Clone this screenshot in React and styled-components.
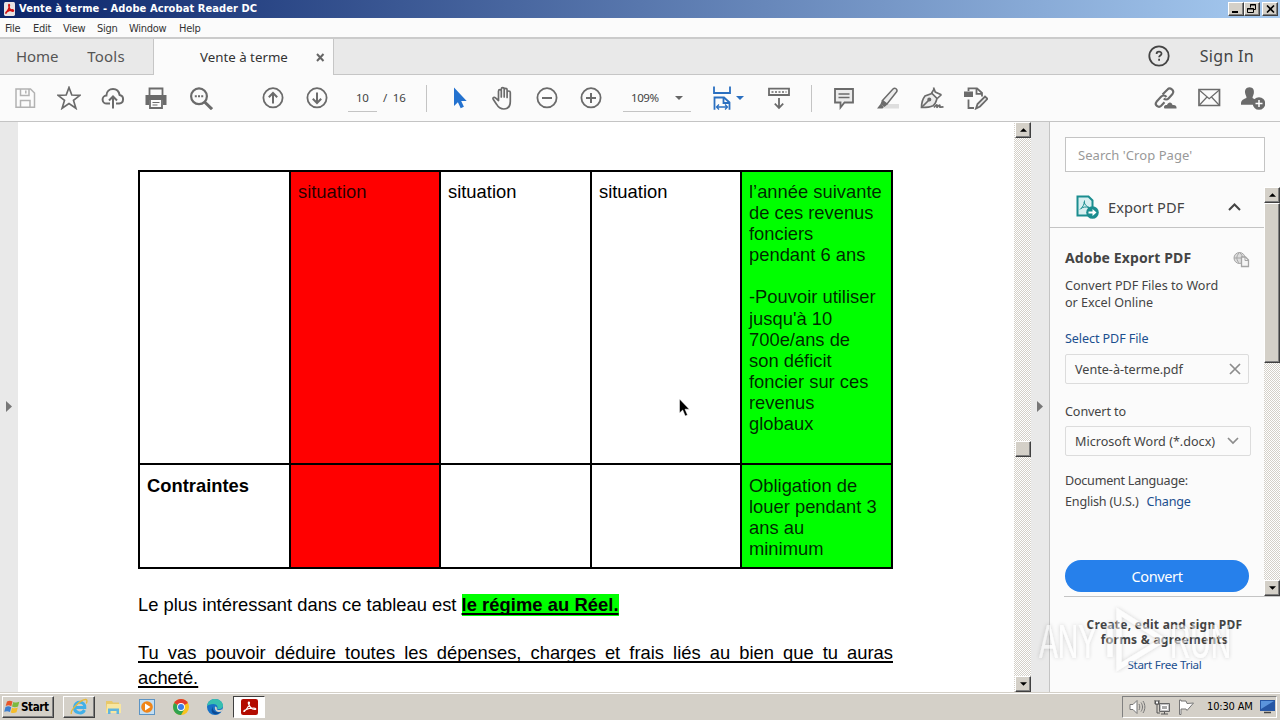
import React from "react";
import styled, { createGlobalStyle, css } from "styled-components";

const GlobalStyle = createGlobalStyle`
  * {
    box-sizing: border-box;
  }

  body {
    margin: 0;
    overflow: hidden;
    font-family: "Noto Sans", sans-serif;
    color: #444;
  }

  svg {
    display: block;
    flex: none;
  }
`;

const raised = css`
  background: #d4d0c8;
  border: 1px solid;
  border-color: #fff #404040 #404040 #fff;
  box-shadow: inset -1px -1px 0 #808080;
`;

const Screen = styled.div`
  width: 1280px;
  height: 720px;
  display: flex;
  flex-direction: column;
  overflow: hidden;
  background: #fbfbfb;
`;

/* title bar */

const TitleBar = styled.header`
  height: 18px;
  display: flex;
  align-items: center;
  padding: 0 2px 0 4px;
  background: linear-gradient(90deg, #0a246a, #a6caf0);
`;

const Title = styled.h1`
  flex: 1;
  margin: 0 0 0 4px;
  font: bold 11px/18px "DejaVu Sans Condensed", sans-serif;
  letter-spacing: 0.09px;
  color: #fff;
`;

const WindowButton = styled.button`
  ${raised}
  width: 16px;
  height: 14px;
  padding: 0;
  margin-left: ${(props) => (props.$gap ? "2px" : "0")};
  display: flex;
  align-items: center;
  justify-content: center;
`;

/* menu */

const MenuBar = styled.nav`
  height: 21px;
  display: flex;
  padding: 1px 0 0 5px;
  border-bottom: 2px solid #cbcbcb;
`;

const MenuItem = styled.span`
  width: ${(props) => props.$width}px;
  font: 11px/19px "DejaVu Sans Condensed", sans-serif;
  letter-spacing: -0.3px;
  color: #333;
`;

/* tabs */

const TabBar = styled.div`
  height: 36px;
  display: flex;
  background: #e9e9e9;
`;

const HomeTabs = styled.div`
  width: 154px;
  display: flex;
  gap: 29px;
  padding-left: 16px;
  border-right: 1px solid #c6c6c6;
  border-bottom: 1px solid #c6c6c6;
  font-size: 15px;
  line-height: 35px;
  color: #555;
`;

const HomeTab = styled.span`
  letter-spacing: ${(props) => props.$spacing}px;
`;

const ActiveTab = styled.div`
  width: 179px;
  display: flex;
  align-items: center;
  justify-content: space-between;
  padding: 0 8px 0 46px;
  background: #fbfbfb;
  font-size: 13.3px;
  color: #333;
`;

const TabRest = styled.div`
  flex: 1;
  display: flex;
  align-items: center;
  justify-content: flex-end;
  gap: 29px;
  padding: 0 26px 2px 0;
  border-left: 1px solid #c6c6c6;
  border-bottom: 1px solid #c6c6c6;
  font-size: 16px;
  letter-spacing: 0.3px;
`;

/* toolbar */

const Toolbar = styled.div`
  height: 47px;
  display: flex;
  align-items: center;
  padding: 0 15px 0 13px;
  border-bottom: 1px solid #c4c4c4;
  color: #6b6b6b;
`;

const ToolGroup = styled.div`
  display: flex;
  align-items: center;
  gap: 20px;
  margin-left: ${(props) => props.$left || 0}px;
`;

const Separator = styled.i`
  width: 1px;
  height: 27px;
  margin-left: ${(props) => props.$left}px;
  background: #c4c4c4;
`;

const PageField = styled.div`
  width: ${(props) => props.$width}px;
  height: 27px;
  display: flex;
  align-items: center;
  justify-content: space-between;
  margin-left: ${(props) => props.$left}px;
  padding: 0 ${(props) => props.$right || 4}px 0 8px;
  border-bottom: 1px solid #c4c4c4;
  font-size: 11.5px;
  letter-spacing: -0.45px;
  color: #444;
`;

const PageCount = styled.span`
  width: 25px;
  margin: 0 0 2px 6px;
  font-size: 11.5px;
  letter-spacing: -0.2px;
  word-spacing: 3px;
  white-space: nowrap;
  color: #444;
`;

const FitWidth = styled.div`
  display: flex;
  align-items: center;
  gap: 2px;
  margin-left: 19px;
  margin-right: 1px;
  color: #2a6fc0;
`;

const Push = styled.div`
  flex: 1;
`;

/* document */

const Workspace = styled.main`
  height: 570px;
  display: flex;
`;

const Gutter = styled.div`
  width: 18px;
  display: flex;
  align-items: center;
  justify-content: center;
  padding-bottom: 2px;
  background: #e9e9e9;
`;

const Page = styled.article`
  width: 996px;
  padding: 48px 121px 0 120px;
  overflow: hidden;
  background: #fff;
  font: 18.36px/21.1px "Liberation Sans", sans-serif;
  color: #000;
`;

const Table = styled.div`
  display: grid;
  grid-template-columns: 149px 148px 149px 148px 149px;
  grid-template-rows: 291px 102px;
  gap: 2px;
  width: 755px;
  padding: 2px;
  background: #000;
`;

const Cell = styled.div`
  padding: ${(props) => (props.$second ? "10px" : "9px")} 0 0 7px;
  white-space: pre-line;
  font-weight: ${(props) => (props.$bold ? "bold" : "normal")};
  background: ${(props) => props.$fill || "#fff"};
  color: ${(props) => (props.$fill ? "rgba(0, 0, 0, 0.85)" : "#000")};
`;

const Paragraph = styled.p`
  width: 755px;
  margin: ${(props) => props.$top}px 0 0;
  line-height: 25px;
`;

const Highlight = styled.strong`
  background: #0f0;
  padding-bottom: 1px;
  letter-spacing: 0.05px;
  text-decoration: underline;
  text-decoration-thickness: 2px;
  text-underline-offset: 2px;
  text-decoration-skip-ink: none;
`;

const Underlined = styled.u`
  display: block;
  text-align: justify;
  text-decoration-thickness: 2px;
  text-underline-offset: 2px;
  text-decoration-skip-ink: none;
`;

/* scroll bars */

const ScrollBar = styled.div`
  width: ${(props) => props.$width}px;
  height: ${(props) => props.$height}px;
  display: flex;
  flex-direction: column;
  padding-left: ${(props) => props.$width - 16}px;
  background: repeating-conic-gradient(#d4d0c8 0 25%, #fff 0 50%) 0 0 / 2px 2px;
`;

const ScrollButton = styled.div`
  ${raised}
  height: 16px;
  flex: none;
  display: flex;
  align-items: center;
  justify-content: center;
`;

const ScrollThumb = styled.div`
  ${raised}
  height: ${(props) => props.$size}px;
  margin: ${(props) => props.$top}px 0 auto;
`;

/* export panel */

const Panel = styled.aside`
  width: 231px;
  display: flex;
  flex-direction: column;
  border-left: 1px solid #c4c4c4;
  background: #fbfbfb;
`;

const SearchBox = styled.div`
  width: 200px;
  height: 35px;
  margin: 15px 0 15px 15px;
  padding-left: 12px;
  border: 1px solid #c4c4c4;
  background: #fff;
  font-size: 13px;
  line-height: 34px;
  letter-spacing: 0.05px;
  color: #999;
`;

const PanelScroll = styled.div`
  height: 409px;
  display: flex;
`;

const PanelBody = styled.div`
  width: 214px;
`;

const PanelHeader = styled.div`
  height: 41px;
  display: flex;
  align-items: center;
  padding: 0 23px 0 25px;
  border-bottom: 1px solid #c4c4c4;
  font-size: 14.6px;
  letter-spacing: 0.05px;
`;

const PanelTitle = styled.span`
  flex: 1;
  margin-left: 9px;
`;

const PanelContent = styled.div`
  display: flex;
  flex-direction: column;
  width: 201px;
  padding-left: 15px;
  font-size: 12.6px;
  line-height: 17px;
`;

const PlanRow = styled.div`
  height: 20px;
  display: flex;
  align-items: flex-end;
  justify-content: space-between;
  margin-top: 20px;
  padding-right: 1px;
  font-size: 14px;
  font-weight: bold;
  line-height: 20px;
  letter-spacing: 0.12px;
`;

const Line = styled.div`
  margin-top: ${(props) => props.$top}px;
  white-space: pre;
  letter-spacing: ${(props) => props.$spacing || 0}px;
`;

const Link = styled.a`
  color: #1b4f8f;
  margin-left: ${(props) => props.$left || 0}px;
`;

const Field = styled.div`
  width: ${(props) => props.$width}px;
  height: 30px;
  display: flex;
  align-items: center;
  justify-content: space-between;
  margin-top: ${(props) => props.$top}px;
  padding: 0 7px 0 9px;
  border: 1px solid #dcdcdc;
  border-radius: 2px;
  white-space: nowrap;
`;

const ConvertButton = styled.button`
  width: 184px;
  height: 32px;
  margin-top: 50px;
  padding: 0;
  border: 0;
  border-radius: 16px;
  background: #2680eb;
  font: 14.6px/30px "Noto Sans", sans-serif;
  letter-spacing: -0.4px;
  color: #fff;
`;

const Promo = styled.div`
  position: relative;
  height: 96px;
  margin-left: 14px;
  padding: 20px 15px 0 0;
  border-top: 1px solid #c4c4c4;
  text-align: center;
  font-size: 11.6px;
  line-height: 15px;
  letter-spacing: -0.3px;
`;

const PromoText = styled.div`
  margin-bottom: 10px;
  font-weight: bold;
  font-size: 12px;
  letter-spacing: 0.26px;
  white-space: pre;
`;

const Watermark = styled.div`
  position: absolute;
  left: -28px;
  top: 6px;
`;

/* taskbar */

const Taskbar = styled.footer`
  height: 28px;
  display: flex;
  align-items: center;
  padding: 1px 3px 0 2px;
  border-top: 1px solid #d4d0c8;
  box-shadow: inset 0 1px 0 #fff;
  background: #d4d0c8;
  font: 11px/20px "DejaVu Sans Condensed", sans-serif;
  color: #000;
`;

const StartButton = styled.button`
  ${raised}
  width: 52px;
  height: 22px;
  display: flex;
  align-items: center;
  gap: 1px;
  padding: 0 0 0 1px;
  margin-right: 9px;
  font: bold 11.6px/20px "DejaVu Sans Condensed", sans-serif;
  letter-spacing: -0.4px;
  color: #000;
`;

const TaskButton = styled.div`
  width: 32px;
  height: 22px;
  margin-right: 2px;
  display: flex;
  align-items: center;
  justify-content: center;
  ${(props) => props.$state === "running" && raised}
  ${(props) =>
    props.$state === "active" &&
    css`
      background: #fff;
      border: 1px solid;
      border-color: #404040 #fff #fff #404040;
    `}
`;

const Tray = styled.div`
  width: 155px;
  height: 22px;
  display: flex;
  align-items: center;
  gap: 8px;
  margin-left: auto;
  padding: 0 1px 0 6px;
  border: 1px solid;
  border-color: #808080 #fff #fff #808080;
`;

const Clock = styled.span`
  margin: 0 -1px 0 4px;
  white-space: nowrap;
  letter-spacing: -0.15px;
`;

const MousePointer = styled.div`
  position: absolute;
  left: 679px;
  top: 399px;
`;

/* icons */

const Icon = ({ size = 24, children, ...rest }) => (
  <svg
    width={size}
    height={size}
    viewBox="0 0 24 24"
    fill="none"
    stroke="currentColor"
    strokeWidth="1.8"
    {...rest}
  >
    {children}
  </svg>
);

const SaveIcon = () => (
  <Icon stroke="#b2b2b2" strokeWidth="1.5">
    <path d="M3 3h14.500l4 4v14.200H3zM7.500 3v6.500h8.500V3M7.500 21v-6.500h9.500V21M12.800 4.500v3" />
  </Icon>
);

const StarIcon = () => (
  <Icon strokeWidth="1.700">
    <path d="M12 1.500l2.800 7.500 8.200.3-6.500 5.100 2.400 7.900L12 17.600l-6.900 4.700 2.400-7.900L1 9.300l8.200-.3z" />
  </Icon>
);

const CloudIcon = () => (
  <Icon strokeWidth="2">
    <path d="M9 17.500H5.800a4 4 0 0 1-.4-8C5.500 5.500 8.500 3 12 3s6 2.500 6.600 6a4.300 4.300 0 0 1-.4 8.500H15" />
    <path d="M12 22.500V11M8 14.500l4-4 4 4" />
  </Icon>
);

const PrintIcon = () => (
  <Icon viewBox="1 0 24 24">
    <path d="M5.500 9V2.500h13V9M6 14v8h12v-8" />
    <path d="M1.500 9h21v10h-3.500v-5H5v5H1.500z" fill="currentColor" stroke="none" />
    <path d="M8.500 16.500h7M8.500 19h5" strokeWidth="1.200" />
  </Icon>
);

const SearchIcon = () => (
  <Icon strokeWidth="2.200">
    <circle cx="10" cy="10.300" r="7.900" />
    <path d="M15.600 16l7.400 7.200" strokeWidth="3" />
    <path d="M5.800 10.300h2M9 10.300h2M12.200 10.300h2" strokeWidth="1.900" />
  </Icon>
);

const CircleIcon = ({ d }) => (
  <Icon>
    <circle cx="12" cy="11.800" r="9.600" />
    <path d={d} strokeWidth="2" />
  </Icon>
);

const ArrowIcon = () => (
  <Icon stroke="none" fill="#2472cf">
    <path d="M7 1.500v18.500l3.900-3.800 2.800 6 3.200-1.500-2.700-5.700h5.500z" />
  </Icon>
);

const HandIcon = () => (
  <Icon strokeWidth="1.700" strokeLinejoin="round" strokeLinecap="round">
    <path d="M7.500 13V5.200c0-2 2.800-2 2.800 0V11 3.200c0-2 2.900-2 2.900 0V11 3.800c0-2 2.900-2 2.900 0V11.500 6.500c0-2 3.200-2 3.200 0v9c0 4.500-2.300 7.500-6.500 7.500-4 0-5.600-1.800-7.300-4.800l-3.300-5c-.8-1.800 1-2.500 2.300-1.300l3 2.600z" />
  </Icon>
);

const FitIcon = () => (
  <Icon stroke="#2a6fc0">
    <path d="M4 .5V7h16V.5M4.500 23.800V11.500h9.500l5.500 5v7.300M13.500 11.500V17h6" />
    <path d="M6.500 21h11M9 18.500L6.500 21 9 23.500M15 18.500l2.500 2.500-2.500 2.500" strokeWidth="1.300" />
  </Icon>
);

const KeyboardIcon = () => (
  <Icon>
    <path d="M2 2.700h20V9H2z" />
    <path d="M4.500 5.900h15" strokeDasharray="2 1.500" strokeWidth="1.500" />
    <path d="M12 12V22M7.800 17.700l4.200 4.200 4.200-4.200" />
  </Icon>
);

const CommentIcon = () => (
  <Icon>
    <path d="M3 3h18v13.500h-8.500L8.500 21.500v-5H3z" fill="#ececec" />
    <path d="M6.500 8h11M6.500 11.500h11" strokeWidth="1.400" />
  </Icon>
);

const HighlighterIcon = () => (
  <Icon strokeWidth="1.500">
    <path d="M12 18h11v4.500H7z" fill="#dedede" stroke="none" />
    <path d="M6.500 14.500L17 3c2-2 5 .5 3.600 2.800L11 18z" fill="#ececec" />
    <path d="M6 14l5.500 4.500-3 2.500L4.500 18zM4.500 18l3.500 3-1.500 1.500H1z" fill="currentColor" stroke="none" />
  </Icon>
);

const SignIcon = () => (
  <Icon strokeWidth="1.700">
    <path d="M1.500 21.500c0-6 1.500-9 3.500-11.500l7-2.500 5 5c-1 3.500-2 6-4 7.200-2.500 1.300-6 1.800-11.500 1.800z" fill="#ececec" />
    <path d="M11.500 7.300l3-4.800M17.300 12.500l4.200-4M13.500 1.500l1.800 4.500 6 2.800M2 21l6.500-6.500" />
    <circle cx="9.300" cy="13.500" r="1.200" fill="currentColor" />
    <path d="M14 21.500c2-3 3.500-3.500 3-1s1.500-1.500 2.500-1.500-.5 2.500 1 2.200l3-.4" />
  </Icon>
);

const EditPageIcon = () => (
  <Icon strokeWidth="1.800">
    <path d="M4.500 5V2.300h8.500L18 7v3.500M12.500 2.500v5.300H18M4.500 13.500V22H10" />
    <path d="M0 5.500h9V11H0z" fill="currentColor" stroke="none" />
    <path d="M12 22.500l1.500-4.500 7.500-7.500 2.500 2.300-7.500 7.700z" fill="#ececec" />
  </Icon>
);

const LinkIcon = () => (
  <Icon strokeWidth="2.100">
    <path d="M9.500 8.500l5-5c2.500-2.700 7.500 1 5 4.500l-4 4.500c-1.300 1.500-3.500 1.300-4.700 0" />
    <path d="M13.500 11c-1.500-2-4-1.800-5.500-.2l-4.500 5c-2.500 3.200 2 6.500 4.700 4l3.300-3.500" />
    <path d="M11.500 22.500c-1.500-2.500 1-4 2.500-3.500 1-3.500 5-3.500 5.500 0 3-.5 4.500 1.500 4 3.500z" fill="currentColor" stroke="none" />
  </Icon>
);

const MailIcon = () => (
  <Icon strokeWidth="1.700">
    <path d="M2 3.500h20.500v16H2z" />
    <path d="M2.500 4.200l9.700 8.500L22 4.200M2.500 19l7.500-8M22 19l-7.500-8" strokeWidth="1.200" />
  </Icon>
);

const AddPersonIcon = () => (
  <Icon stroke="none" fill="currentColor">
    <path d="M8.500 1.200c3.600 0 5 2.800 4.300 6.200-.4 2-1.300 3-1.300 4.500l3 1.800-2 5H0c0-4.500 1-5 5.500-6.800 0-2.500-1-2.500-1.400-5C3.700 4 5 1.200 8.500 1.200z" />
    <circle cx="18" cy="17.500" r="6.300" />
    <path d="M18 14v7M14.500 17.500h7" stroke="#fff" strokeWidth="1.500" />
  </Icon>
);

const HelpIcon = () => (
  <Icon>
    <circle cx="12" cy="12" r="9.700" />
    <path d="M9.600 10c0-3.200 4.900-3 4.900-.3 0 1.800-2.400 1.800-2.400 3.600M12.100 14.800v1.900" />
  </Icon>
);

const Triangle = ({ dir = "down", w = 7, color = "#000" }) => {
  const paths = { up: "M0 4l4-4 4 4z", down: "M0 0h8L4 4z", right: "M0 0v11l6-5.500z" };
  const right = dir === "right";
  return (
    <svg
      width={right ? 6 : w}
      height={right ? 11 : Math.ceil(w / 2)}
      viewBox={right ? "0 0 6 11" : "0 0 8 4"}
      fill={color}
    >
      <path d={paths[dir]} />
    </svg>
  );
};

const AcrobatIcon = ({ small }) => (
  <svg width={small ? 11 : 17} height={small ? 14 : 16} viewBox="0 0 16 16" preserveAspectRatio="none">
    <rect width="16" height="16" rx="2" fill={small ? "#e8e3e3" : "#b30b00"} />
    <path
      d="M3 12.500c2-2 4.500-5 5-8.500 0-1.500-1.500-1.500-1 .5.700 3 3 5.500 6 6 1.500 0 1-1.500-1-1.500-3 0-6 .8-8.500 2.300-1 .7-1 1.500-.5 1.200z"
      fill="none"
      stroke={small ? "#d01010" : "#fff"}
      strokeWidth={small ? 2 : 1.1}
    />
  </svg>
);

const ExportIcon = () => (
  <svg width="24" height="24" viewBox="0 0 24 24" fill="none">
    <path d="M2.500 1.500h11l4 4V20.500h-15z" fill="#d8eff0" stroke="#1b8d8f" strokeWidth="2" />
    <path d="M5 14.500c3-2.500 4.500-5.500 4.500-9M9 7c1 3 3 5 5.500 5.500M6 13.500c2-1.500 4.500-2 8-1" stroke="#1b8d8f" />
    <circle cx="17.500" cy="17.500" r="6.300" fill="#1b8d8f" />
    <path d="M13.500 16.500h4v-2.500l4 3.500-4 3.500v-2.500h-4z" fill="#fff" />
  </svg>
);

const GlobePageIcon = () => (
  <svg width="17" height="17" viewBox="0 0 17 16" fill="none" stroke="#a5a5a5">
    <circle cx="6.500" cy="6.500" r="5.500" fill="#ddd" />
    <path d="M1 6.500h11M6.500 1c-4 4-3 8 0 11M6.500 1c2.500 2 3 4 3 6" />
    <path d="M8.500 5.500h4l3 3v6.500h-7z" fill="#f5f5f5" strokeWidth="1.300" />
    <path d="M12 5.500v3.500h3.500" />
  </svg>
);

const WindowsFlag = () => (
  <svg width="16" height="16" viewBox="0 0 16 16">
    <path d="M3 2.500c2-1 3.500-1 5.500 0L7.300 7.200C5.500 6 3.500 6 1.700 7z" fill="#e8562a" />
    <path d="M9.300 2.900c2 .9 4 .8 6-.2L14 7.500c-2 1-4 1-6 .1z" fill="#7cb93d" />
    <path d="M1.500 8c2-1 4-1 5.700.2L6 13c-2-1.200-4-1-5.800-.2z" fill="#3c7fd0" />
    <path d="M8 8.700c2 1 4 .8 5.800-.1L12.500 13.300c-2 1-4 1-5.700.1z" fill="#f5bd2b" />
  </svg>
);

const IeIcon = () => (
  <svg width="18" height="18" viewBox="0 0 18 18" fill="none">
    <path d="M14.500 12c-2.500 5-10.500 3-10-3 .5-6.500 10.500-6 10.300.4H6" stroke="#42b0e8" strokeWidth="3" />
    <path d="M1.500 16c-2-3 9-15 14.500-14.500 1.500.3 1 2.500.3 4" stroke="#e5b83a" strokeWidth="1.300" />
  </svg>
);

const FolderIcon = () => (
  <svg width="17" height="16" viewBox="0 0 17 16">
    <path d="M1 2h6l1 1.500h6V14H1z" fill="#e8c86a" />
    <path d="M2 5h14v9H1z" fill="#f8e6a0" />
    <path d="M3 15v-5.500h11V15h-2.500v-3H5.500v3z" fill="#62b5dd" />
  </svg>
);

const PlayerIcon = () => (
  <svg width="16" height="16" viewBox="0 0 16 16">
    <rect x=".5" y=".5" width="15" height="15" fill="#c3def2" stroke="#5c94c4" />
    <circle cx="8" cy="8" r="5.800" fill="#f08518" />
    <path d="M6 4.500v7l5.500-3.500z" fill="#fff" />
  </svg>
);

const ChromeIcon = () => (
  <svg width="16" height="16" viewBox="0 0 16 16">
    <circle cx="8" cy="8" r="8" fill="#f9c31f" />
    <path d="M8 8L1.100 4a8 8 0 0 1 13.800 0z" fill="#e23b2e" />
    <path d="M8 8L1.100 4A8 8 0 0 0 8 16l3.500-6z" fill="#31a350" />
    <circle cx="8" cy="8" r="3.900" fill="#fff" />
    <circle cx="8" cy="8" r="3" fill="#3b7de8" />
  </svg>
);

const EdgeIcon = () => (
  <svg width="16" height="16" viewBox="0 0 16 16">
    <circle cx="8" cy="8" r="8" fill="#1771c6" />
    <path d="M0 7C1 2 4 0 8 0c5 0 8 3.500 8 6.500 0 3-3 4-6 3.500 1.500-2 0-5-3.500-5C3.500 5 1 6 0 7z" fill="#37bfb0" />
    <path d="M6 7.500c-1.500 4 3 7 7.500 5.500C9 18 1.500 14.500 6 7.500z" fill="#0c4a94" />
    <path d="M8 7.500c1.500 0 2.200 1.200 1.800 2.500.5 1.500 4 1.500 6.200-.5l-1 3c-4 1.500-8-.5-7-5z" fill="#d4d0c8" />
  </svg>
);

const SpeakerIcon = () => (
  <svg width="17" height="16" viewBox="0 0 17 16" fill="none" stroke="#777">
    <path d="M1 5.500h3l4-4v13l-4-4H1z" fill="#fff" />
    <path d="M10 5c1 2 1 4 0 6M12 3.500c2 3 2 6 0 9M14 2c2.500 4 2.500 8 0 12" />
  </svg>
);

const NetworkIcon = () => (
  <svg width="16" height="16" viewBox="0 0 16 16" fill="none" stroke="#555">
    <path d="M5.500 4.500h10v8h-10z" fill="#c2c2c2" stroke="#666" />
    <path d="M7.500 6.500h6v4h-6z" fill="#aaa" stroke="#fff" />
    <path d="M7 15h7M10.500 13v2M1 1v4h4V1M3 5v9h3" />
    <path d="M1.500 2h3v3h-3z" fill="#fff" />
  </svg>
);

const FlagIcon = () => (
  <svg width="17" height="16" viewBox="0 0 17 16" fill="#fff" stroke="#777">
    <path d="M1.500 1v14.500h1.500V10h5l1 1.500L15.500 4 9 4.500 8 2H3V1z" />
  </svg>
);

const DesktopIcon = () => (
  <svg width="15" height="14" viewBox="0 0 15 14">
    <rect width="15" height="11" fill="#2757a5" />
    <path d="M1 1h13L1 9z" fill="#5b94dc" />
    <path d="M4 12.500h7" stroke="#444" strokeWidth="1.500" />
  </svg>
);

const AnyRunMark = () => (
  <svg width="200" height="70" viewBox="0 0 200 70">
    <defs>
      <filter id="soft" x="-10%" y="-20%" width="120%" height="140%">
        <feDropShadow dx="0" dy="0" stdDeviation="2" floodColor="#000" floodOpacity=".35" />
      </filter>
    </defs>
    <g
      filter="url(#soft)"
      opacity=".5"
      fill="#fff"
      fontFamily="Liberation Sans, sans-serif"
      fontSize="49"
    >
      <text x="3" y="55" textLength="58" lengthAdjust="spacingAndGlyphs">ANY</text>
      <text x="134" y="55" textLength="61" lengthAdjust="spacingAndGlyphs">RUN</text>
      <path d="M83 9l44 28-44 27zM74 20v34" fill="none" stroke="#fff" strokeWidth="5" />
    </g>
  </svg>
);

const menus = [
  { name: "File", width: 28 },
  { name: "Edit", width: 30 },
  { name: "View", width: 34 },
  { name: "Sign", width: 32 },
  { name: "Window", width: 50 },
  { name: "Help", width: 30 },
];

const rightCell = `l’année suivante
de ces revenus
fonciers
pendant 6 ans

-Pouvoir utiliser
jusqu'à 10
700e/ans de
son déficit
foncier sur ces
revenus
globaux`;

const cells = [
  { text: "" },
  { text: "situation", fill: "#f00" },
  { text: "situation" },
  { text: "situation" },
  { text: rightCell, fill: "#0f0" },
  { text: "Contraintes", bold: true, second: true },
  { text: "", fill: "#f00" },
  { text: "" },
  { text: "" },
  { text: "Obligation de\nlouer pendant 3\nans au\nminimum", fill: "#0f0", second: true },
];

const tasks = [
  { icon: <IeIcon />, state: "running" },
  { icon: <FolderIcon /> },
  { icon: <PlayerIcon /> },
  { icon: <ChromeIcon /> },
  { icon: <EdgeIcon /> },
  { icon: <AcrobatIcon />, state: "active" },
];

function App() {
  return (
    <Screen>
      <GlobalStyle />
      <TitleBar>
        <AcrobatIcon small />
        <Title>Vente à terme - Adobe Acrobat Reader DC</Title>
        <WindowButton>
          <svg width="10" height="9" fill="#000">
            <path d="M1 6h6v2H1z" />
          </svg>
        </WindowButton>
        <WindowButton>
          <svg width="10" height="10" fill="none" stroke="#000">
            <path d="M3.500 3.500v-3h5v5H7M3 1h6M.5 4.500h6v4h-6zM0 5h7" />
          </svg>
        </WindowButton>
        <WindowButton $gap>
          <svg width="9" height="8" stroke="#000" strokeWidth="1.600">
            <path d="M1 .5l7 7M8 .5l-7 7" />
          </svg>
        </WindowButton>
      </TitleBar>

      <MenuBar>
        {menus.map((item) => (
          <MenuItem key={item.name} $width={item.width}>
            {item.name}
          </MenuItem>
        ))}
      </MenuBar>

      <TabBar>
        <HomeTabs>
          <HomeTab $spacing={-0.1}>Home</HomeTab>
          <HomeTab $spacing={0.2}>Tools</HomeTab>
        </HomeTabs>
        <ActiveTab>
          Vente à terme
          <svg width="9" height="9" stroke="#666" strokeWidth="2">
            <path d="M1 1l6.500 7M7.500 1L1 8" />
          </svg>
        </ActiveTab>
        <TabRest>
          <HelpIcon />
          Sign In
        </TabRest>
      </TabBar>

      <Toolbar>
        <ToolGroup>
          <SaveIcon />
          <StarIcon />
          <CloudIcon />
          <PrintIcon />
          <SearchIcon />
        </ToolGroup>
        <ToolGroup $left={48}>
          <CircleIcon d="M12 17.500V7M7.800 11.200L12 7l4.200 4.200" />
          <CircleIcon d="M12 6.500V17M7.800 12.800L12 17l4.200-4.200" />
        </ToolGroup>
        <PageField $width={29} $left={19}>
          10
        </PageField>
        <PageCount>/ 16</PageCount>
        <Separator $left={18} />
        <ToolGroup $left={20}>
          <ArrowIcon />
          <HandIcon />
          <CircleIcon d="M7 12h10" />
          <CircleIcon d="M7 12h10M12 7v10" />
        </ToolGroup>
        <PageField $width={68} $left={20} $right={8}>
          109%
          <Triangle w={8} color="#666" />
        </PageField>
        <FitWidth>
          <FitIcon />
          <Triangle w={8} color="#2a6fc0" />
        </FitWidth>
        <ToolGroup $left={22}>
          <KeyboardIcon />
        </ToolGroup>
        <Separator $left={20} />
        <ToolGroup $left={20}>
          <CommentIcon />
          <HighlighterIcon />
          <SignIcon />
          <EditPageIcon />
        </ToolGroup>
        <Push />
        <ToolGroup>
          <LinkIcon />
          <MailIcon />
          <AddPersonIcon />
        </ToolGroup>
      </Toolbar>

      <Workspace>
        <Gutter>
          <Triangle dir="right" color="#777" />
        </Gutter>
        <Page>
          <Table>
            {cells.map((cell, index) => (
              <Cell key={index} $fill={cell.fill} $bold={cell.bold} $second={cell.second}>
                {cell.text}
              </Cell>
            ))}
          </Table>
          <Paragraph $top={23}>
            Le plus intéressant dans ce tableau est <Highlight>le régime au Réel.</Highlight>
          </Paragraph>
          <Paragraph $top={23}>
            <Underlined>
              Tu vas pouvoir déduire toutes les dépenses, charges et frais liés au bien que tu auras
              acheté.
            </Underlined>
          </Paragraph>
        </Page>
        <ScrollBar $width={17}>
          <ScrollButton>
            <Triangle dir="up" />
          </ScrollButton>
          <ScrollThumb $top={303} $size={16} />
          <ScrollButton>
            <Triangle />
          </ScrollButton>
        </ScrollBar>
        <Gutter>
          <Triangle dir="right" color="#777" />
        </Gutter>
        <Panel>
          <SearchBox>Search 'Crop Page'</SearchBox>
          <PanelScroll>
            <PanelBody>
              <PanelHeader>
                <ExportIcon />
                <PanelTitle>Export PDF</PanelTitle>
                <svg width="13" height="8" fill="none" stroke="#444" strokeWidth="2">
                  <path d="M1 7l5.500-5.500L12 7" />
                </svg>
              </PanelHeader>
              <PanelContent>
                <PlanRow>
                  Adobe Export PDF
                  <GlobePageIcon />
                </PlanRow>
                <Line $top={9}>{"Convert PDF Files to Word\nor Excel Online"}</Line>
                <Line $top={19} $spacing={-0.1}>
                  <Link>Select PDF File</Link>
                </Line>
                <Field $top={7} $width={184}>
                  Vente-à-terme.pdf
                  <svg width="12" height="12" stroke="#8c8c8c" strokeWidth="1.700">
                    <path d="M1 1l10 10M11 1L1 11" />
                  </svg>
                </Field>
                <Line $top={19} $spacing={-0.1}>Convert to</Line>
                <Field $top={6} $width={186}>
                  Microsoft Word (*.docx)
                  <svg width="20" height="8" fill="none" stroke="#8c8c8c" strokeWidth="1.700">
                    <path d="M5 1l5 5 5-5" />
                  </svg>
                </Field>
                <Line $top={16} $spacing={-0.25}>Document Language:</Line>
                <Line $top={4} $spacing={-0.2}>
                  English (U.S.)
                  <Link $left={8}>Change</Link>
                </Line>
                <ConvertButton>Convert</ConvertButton>
              </PanelContent>
            </PanelBody>
            <ScrollBar $width={16} $height={409}>
              <ScrollButton>
                <Triangle dir="up" />
              </ScrollButton>
              <ScrollThumb $top={0} $size={160} />
              <ScrollButton>
                <Triangle />
              </ScrollButton>
            </ScrollBar>
          </PanelScroll>
          <Promo>
            <PromoText>{"Create, edit and sign PDF\nforms & agreements"}</PromoText>
            <Link>Start Free Trial</Link>
            <Watermark>
              <AnyRunMark />
            </Watermark>
          </Promo>
        </Panel>
      </Workspace>

      <Taskbar>
        <StartButton>
          <WindowsFlag />
          Start
        </StartButton>
        {tasks.map((task, index) => (
          <TaskButton key={index} $state={task.state}>
            {task.icon}
          </TaskButton>
        ))}
        <Tray>
          <SpeakerIcon />
          <NetworkIcon />
          <FlagIcon />
          <Clock>10:30 AM</Clock>
          <DesktopIcon />
        </Tray>
      </Taskbar>

      <MousePointer>
        <svg width="11" height="18" fill="#000" stroke="#fff" strokeWidth=".5">
          <path d="M.5 0v14l3.200-3 2.500 6 2.300-1-2.500-5.800h4.300z" />
        </svg>
      </MousePointer>
    </Screen>
  );
}

export default App;
